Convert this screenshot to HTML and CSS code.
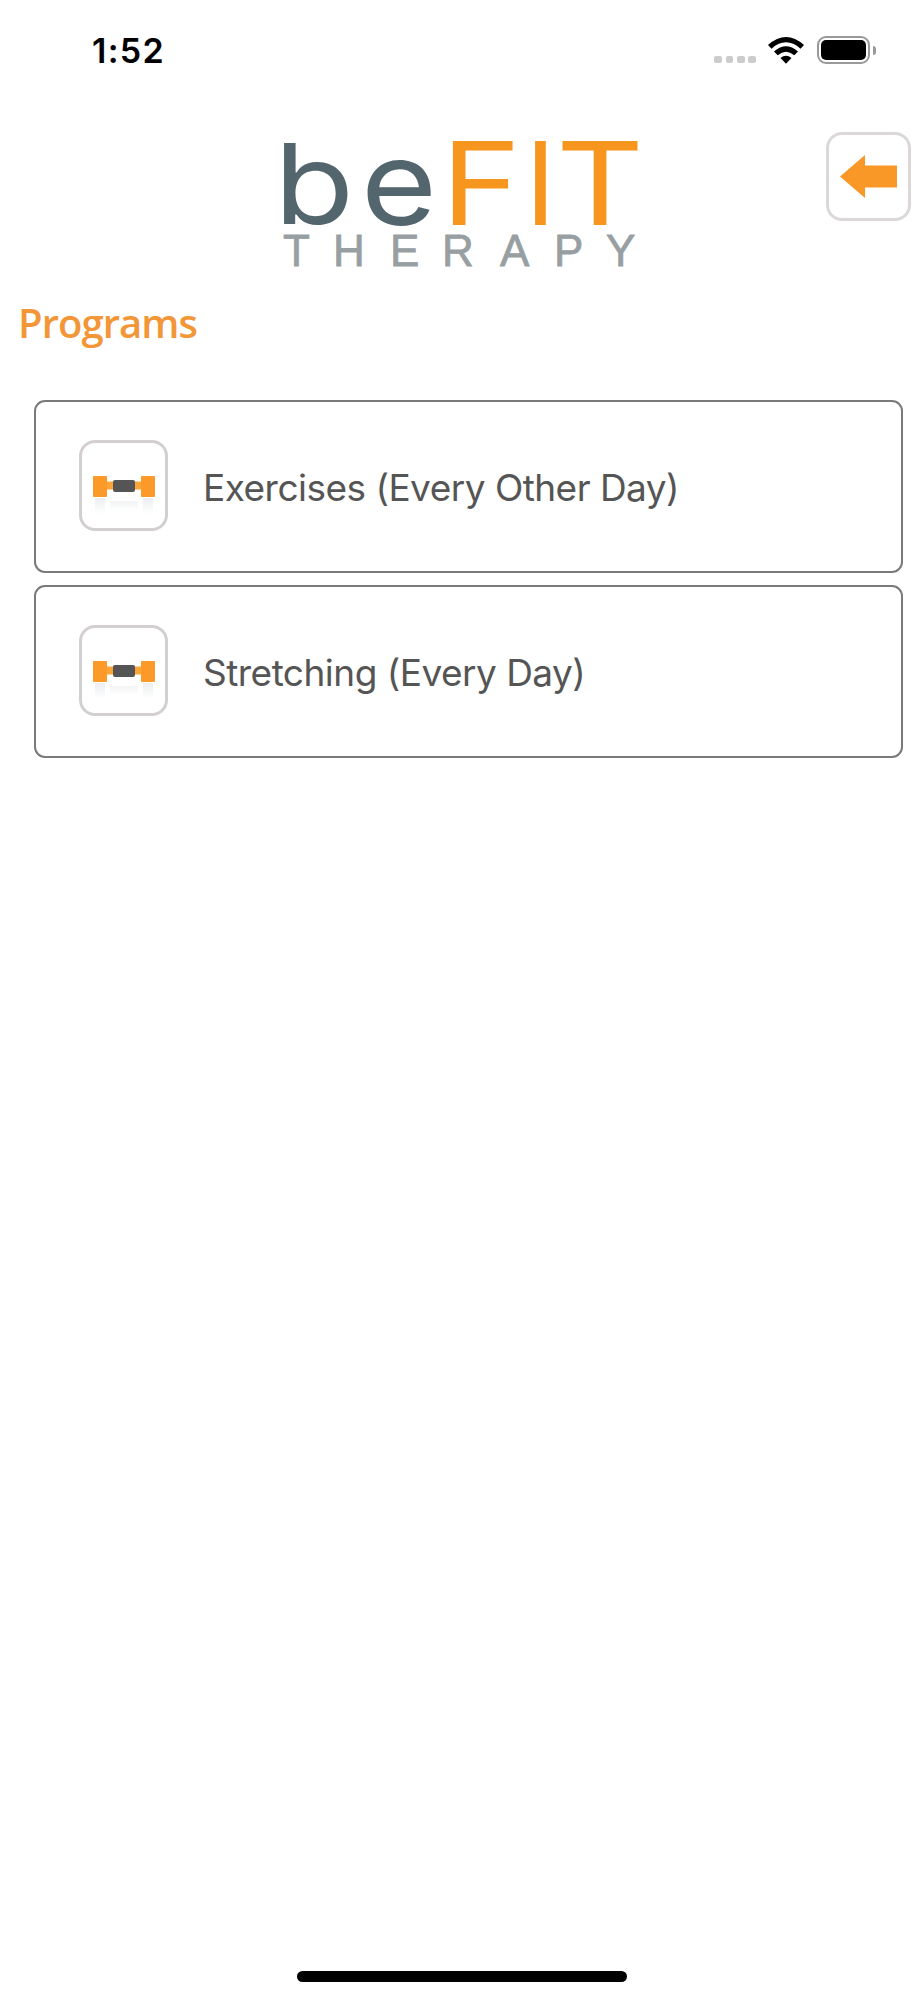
FILE: index.html
```html
<!DOCTYPE html>
<html lang="en">
<head>
<meta charset="UTF-8">
<meta name="viewport" content="width=device-width, initial-scale=1.0">
<title>beFIT Therapy - Programs</title>
<link rel="stylesheet" href="styles.css">
</head>
<body>

  <div id="container">
    <div class="status-bar">
      <span class="time">1:52</span>
      <div class="status-icons">
        <div class="signal"><i></i><i></i><i></i><i></i></div>
        <svg class="wifi" width="36" height="27" viewBox="0 0 36 27">
          <path d="M0 8 Q18 -8 36 8 L32.500 11.700 Q18 -1 3.500 11.700 Z"/>
          <path d="M6 14.500 Q18 4 30 14.500 L26.300 18.300 Q18 11 9.700 18.300 Z"/>
          <path d="M12.500 21 Q18 16.500 23.500 21 L18 26.700 Z"/>
        </svg>
        <div class="battery"><div class="level"></div></div>
        <div class="battery-tip"></div>
      </div>
    </div>

    <header>
      <svg class="logo" width="360" height="134" viewBox="0 0 360 134">
        <g class="logo-be">
          <text x="-6" y="92" textLength="80" lengthAdjust="spacingAndGlyphs">b</text>
          <text class="logo-e" x="81" y="92.500" textLength="76" lengthAdjust="spacingAndGlyphs">e</text>
        </g>
        <g class="logo-fit">
          <text x="161" y="93" textLength="80" lengthAdjust="spacingAndGlyphs">F</text>
          <text x="245" y="93">I</text>
          <text x="276" y="93" textLength="88" lengthAdjust="spacingAndGlyphs">T</text>
        </g>
        <text class="logo-therapy" x="3 53 110 162 220 274 326" y="134">THERAPY</text>
      </svg>
      <button class="back" aria-label="Back">
        <svg width="57" height="43" viewBox="0 0 57 43">
          <path d="M0 21.500 L25 0 V10.500 H57 V32.500 H25 V43 Z"/>
        </svg>
      </button>
    </header>

    <h1>Programs</h1>

    <div class="programs">
      <div class="program">
        <div class="icon">
          <svg width="64" height="42" viewBox="0 0 64 42">
            <use href="#dumbbell"/>
          </svg>
        </div>
        <span class="name">Exercises (Every Other Day)</span>
      </div>
      <div class="program">
        <div class="icon">
          <svg width="64" height="42" viewBox="0 0 64 42">
            <use href="#dumbbell"/>
          </svg>
        </div>
        <span class="name">Stretching (Every Day)</span>
      </div>
    </div>

    <div class="home-bar"></div>
  </div>

  <svg class="defs" width="0" height="0">
    <defs>
      <linearGradient id="fade" x1="0" y1="0" x2="0" y2="1">
        <stop offset="0" stop-color="#eceef1"/>
        <stop offset="1" stop-color="#ffffff"/>
      </linearGradient>
      <g id="dumbbell">
        <rect x="14" y="8.500" width="36" height="8" fill="#fba536"/>
        <rect x="1" y="3" width="14" height="21" rx="1" fill="#fb9a28"/>
        <rect x="49" y="3" width="14" height="21" rx="1" fill="#fb9a28"/>
        <rect x="21" y="7" width="22" height="12" rx="2" fill="#555"/>
        <rect x="3" y="25" width="10" height="16" fill="url(#fade)"/>
        <rect x="51" y="25" width="10" height="16" fill="url(#fade)"/>
        <rect x="18" y="28" width="28" height="9" fill="url(#fade)" opacity="0.7"/>
      </g>
    </defs>
  </svg>

</body>
</html>
```
FILE: styles.css
```css
body {
  font-family: Inter, "Liberation Sans", sans-serif;
  margin: 0;
  background-color: #fff;
}

#container {
  display: flex;
  flex-direction: column;
  height: 2000px;
}

.status-bar {
  display: flex;
  justify-content: space-between;
  align-items: center;
  height: 100px;
  padding: 0 48px 0 92px;
}

.time {
  padding-top: 2px;
  font-size: 34px;
  font-weight: 600;
  line-height: 40px;
  letter-spacing: 1.3px;
}

.status-icons {
  display: flex;
  align-items: center;
}

/* No signal dots */
.signal {
  display: flex;
  gap: 3.5px;
  margin: 19px 12px 0 0;
}

.signal i {
  width: 7.8px;
  height: 7.8px;
  border-radius: 2px;
  background-color: #ccc;
}

.wifi {
  margin-right: 13px;
}

.battery {
  box-sizing: border-box;
  width: 53px;
  height: 28px;
  padding: 2px;
  border: 2px solid #999;
  border-radius: 9px;
}

.level {
  height: 20px;
  border-radius: 5px;
  background-color: #000;
}

.battery-tip {
  width: 3px;
  height: 9px;
  margin-left: 3px;
  border-radius: 0 4px 4px 0;
  background-color: #999;
}

header {
  display: flex;
  justify-content: space-between;
  align-items: flex-start;
  height: 190px;
  padding: 32px 13px 0 280px;
  box-sizing: border-box;
}

.logo {
  overflow: visible;
}

.logo-be {
  font-size: 112px;
  fill: #53656d;
}

.logo-e {
  font-size: 117px;
}

.logo-fit {
  font-size: 115px;
  fill: #f6961f;
}

.logo-therapy {
  font-family: "Liberation Sans", Arial, sans-serif;
  font-size: 44px;
  fill: #989fa2;
  stroke: #989fa2;
  stroke-width: 0.8px;
}

.back {
  display: flex;
  align-items: center;
  justify-content: center;
  box-sizing: border-box;
  width: 85px;
  height: 89px;
  padding: 0;
  border: 3px solid #dcd8d9;
  border-radius: 16px;
  background-color: #fff;
}

.back path {
  fill: #f99827;
}

h1 {
  margin: 0;
  height: 110px;
  padding: 6px 0 0 18px;
  box-sizing: border-box;
  font-family: "Open Sans", sans-serif;
  font-size: 40px;
  font-weight: 600;
  line-height: 54px;
  letter-spacing: -0.95px;
  color: #f39637;
}

.programs {
  display: flex;
  flex-direction: column;
  gap: 12px;
  padding: 0 21px 0 34px;
}

.program {
  display: flex;
  align-items: center;
  box-sizing: border-box;
  height: 173px;
  padding-left: 43px;
  border: 2px solid #7a7a7a;
  border-radius: 11px;
}

.icon {
  display: flex;
  align-items: center;
  justify-content: center;
  box-sizing: border-box;
  width: 89px;
  height: 91px;
  padding-top: 16px;
  margin: 0 35px 2px 0;
  border: 3px solid #d3cfd0;
  border-radius: 16px;
}

.name {
  padding-top: 2px;
  font-size: 37px;
  letter-spacing: -0.52px;
  color: #555;
}

.home-bar {
  width: 330px;
  height: 11px;
  margin: auto auto 18px;
  border-radius: 6px;
  background-color: #000;
}

.defs {
  display: block;
}
```
